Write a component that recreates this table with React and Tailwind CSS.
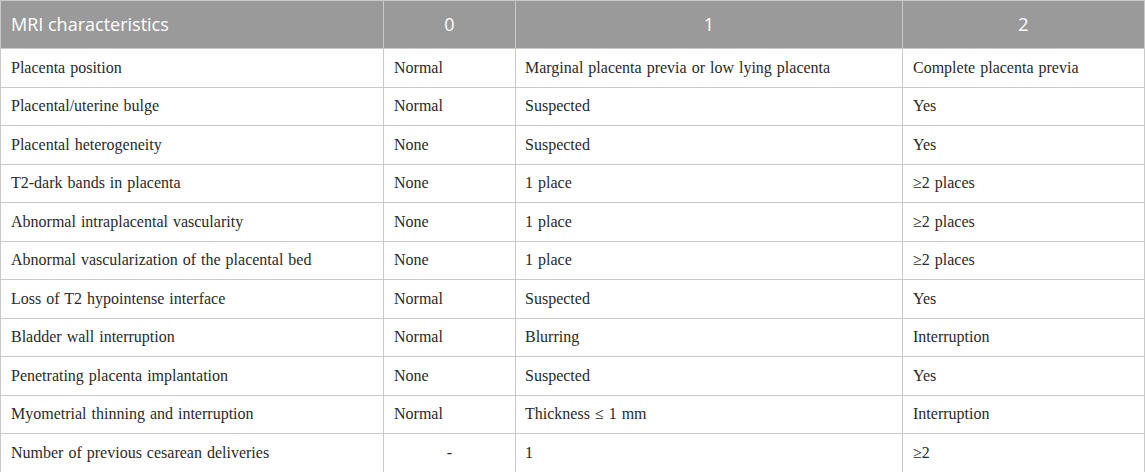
import React from "react";

const rows = [
  ["Placenta position", "Normal", "Marginal placenta previa or low lying placenta", "Complete placenta previa"],
  ["Placental/uterine bulge", "Normal", "Suspected", "Yes"],
  ["Placental heterogeneity", "None", "Suspected", "Yes"],
  ["T2-dark bands in placenta", "None", "1 place", "≥2 places"],
  ["Abnormal intraplacental vascularity", "None", "1 place", "≥2 places"],
  ["Abnormal vascularization of the placental bed", "None", "1 place", "≥2 places"],
  ["Loss of T2 hypointense interface", "Normal", "Suspected", "Yes"],
  ["Bladder wall interruption", "Normal", "Blurring", "Interruption"],
  ["Penetrating placenta implantation", "None", "Suspected", "Yes"],
  ["Myometrial thinning and interruption", "Normal", "Thickness ≤ 1 mm", "Interruption"],
  ["Number of previous cesarean deliveries", "-", "1", "≥2"],
];

export default function App() {
  return (
    <div className="w-[1145px] h-[472px] bg-white">
      <table className="w-[1144px] border-collapse table-fixed">
        <colgroup>
          <col className="w-[383px]" />
          <col className="w-[132px]" />
          <col className="w-[387px]" />
          <col className="w-[242px]" />
        </colgroup>
        <thead>
          {/* header */}
          <tr className="h-[48px] bg-[#9a9a9a] text-white font-['Open_Sans',sans-serif] text-[18px]">
            <th className="border border-[#c9c9c9] px-[10px] text-left font-normal">MRI characteristics</th>
            <th className="border border-[#c9c9c9] font-normal text-center">0</th>
            <th className="border border-[#c9c9c9] font-normal text-center">1</th>
            <th className="border border-[#c9c9c9] font-normal text-center">2</th>
          </tr>
        </thead>
        <tbody className="font-['Liberation_Serif',serif] text-[16px] text-[#2a2a2a] [word-spacing:1px]">
          {rows.map((r) => (
            <tr key={r[0]} className="h-[38.5px]">
              <td className="border border-[#c9c9c9] px-[10px]">{r[0]}</td>
              <td className={"border border-[#c9c9c9] px-[10px] " + (r[1] === "-" ? "text-center" : "")}>{r[1]}</td>
              <td className="border border-[#c9c9c9] px-[9px]">{r[2]}</td>
              <td className="border border-[#c9c9c9] px-[10px]">{r[3]}</td>
            </tr>
          ))}
        </tbody>
      </table>
    </div>
  );
}
